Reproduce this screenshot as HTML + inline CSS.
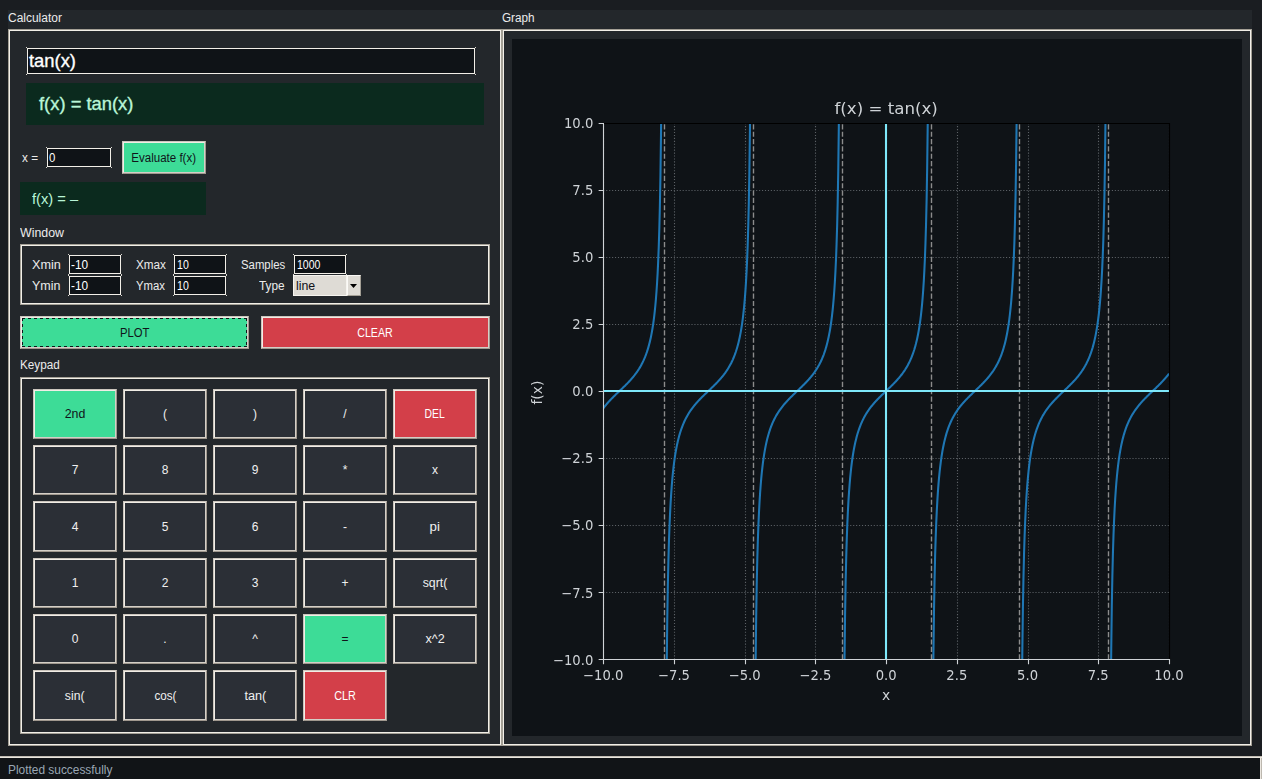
<!DOCTYPE html>
<html lang="en"><head><meta charset="utf-8"><title>Graphing Calculator</title>
<style>
html,body{margin:0;padding:0}
body{width:1262px;height:779px;background:#1a1d21;overflow:hidden;position:relative;
 font-family:"Liberation Sans",sans-serif;font-size:12px;color:#ececec}
div{position:absolute;box-sizing:border-box;white-space:nowrap}
.panel{background:#23272b}
.groove{border:1px solid #a39f95;box-shadow:inset 0 0 0 1px #f2efe8}
.t{white-space:pre;transform-origin:0 0}
.btn span{display:inline-block;transform-origin:50% 50%}
.entry{background:#0f1317;border:1px solid #f2efe8}
.entry:before,.entry:after{content:"";position:absolute;left:-2px;right:-2px;height:1px;
 background:linear-gradient(90deg,#d8d5ce 1px,transparent 1px,transparent calc(100% - 1px),#d8d5ce calc(100% - 1px))}
.entry:before{top:-2px}.entry:after{bottom:-2px}
.dispbg{background:#0b2a1e}
.btn{border:2px solid;border-color:#cbc5bd #a0988e #a0988e #cbc5bd;text-align:center;line-height:14px;font-size:12px}
.btn:after{content:"";position:absolute;left:-1px;top:-1px;right:-1px;bottom:-1px;border:1px solid;border-color:#f1ede6 #d4cfc7 #d4cfc7 #f1ede6}
.g{background:#3ddc97;color:#10141a}
.r{background:#d33f49;color:#fff}
.key{width:84px;background:#2b2f36;color:#f0f0f0}
.key.g{background:#3ddc97;color:#10141a}
.key.r{background:#d33f49;color:#fff}
svg.plot{position:absolute;left:512px;top:39px;display:block;will-change:transform}
</style></head><body>
<div class="panel" style="left:8px;top:10px;width:1244px;height:736px"></div>
<div class="groove" style="left:8px;top:29px;width:494px;height:717px"></div>
<div class="groove" style="left:502px;top:29px;width:750px;height:717px"></div>

<div class="entry" style="left:27px;top:48px;width:448px;height:26px"></div>
<div class="dispbg" style="left:26px;top:83px;width:458px;height:42px"></div>

<div class="entry" style="left:47px;top:148px;width:64px;height:19px"></div>
<div class="btn g" style="left:122px;top:141px;width:84px;height:33px;padding-top:8px"><span id="beval" style="transform:scaleX(0.9601)">Evaluate f(x)</span></div>
<div class="dispbg" style="left:20px;top:182px;width:186px;height:33px"></div>

<div class="groove" style="left:20px;top:244px;width:470px;height:61px"></div>
<div class="entry" style="left:69px;top:255px;width:52px;height:19px"></div>
<div class="entry" style="left:174px;top:255px;width:52px;height:19px"></div>
<div class="entry" style="left:294px;top:255px;width:52px;height:19px"></div>
<div class="entry" style="left:69px;top:276px;width:52px;height:19px"></div>
<div class="entry" style="left:174px;top:276px;width:52px;height:19px"></div>
<div class="combo" style="left:293px;top:275px;width:68px;height:21px;background:#dedbd5">
 <div style="left:0;top:0;width:54px;height:21px;border:1px solid #f6f4ef"></div>
 <div style="left:54px;top:0;width:14px;height:21px;border:1px solid;border-color:#fbfaf7 #a39f95 #a39f95 #fbfaf7"></div>
 <svg style="position:absolute;left:57px;top:9px" width="7" height="4" viewBox="0 0 7 4"><path d="M0 0h7L3.5 4z" fill="#000"/></svg>
</div>

<div class="btn g" style="left:20px;top:316px;width:229px;height:33px;padding-top:8px"><span id="bplot" style="transform:scaleX(0.9408)">PLOT</span><div style="left:0;top:0;right:0;bottom:0;background:repeating-linear-gradient(90deg,#10141a 0 3px,transparent 3px 6px) 0 0/100% 1px no-repeat,repeating-linear-gradient(90deg,#10141a 0 3px,transparent 3px 6px) 0 100%/100% 1px no-repeat,repeating-linear-gradient(180deg,#10141a 0 3px,transparent 3px 6px) 0 0/1px 100% no-repeat,repeating-linear-gradient(180deg,#10141a 0 3px,transparent 3px 6px) 100% 0/1px 100% no-repeat"></div></div>
<div class="btn r" style="left:261px;top:316px;width:229px;height:33px;padding-top:8px"><span id="bclear" style="transform:scaleX(0.8880)">CLEAR</span></div>

<div class="groove" style="left:20px;top:377px;width:470px;height:357px"></div>
<div class="key btn g" style="left:33px;top:389px;height:50px;padding-top:16px"><span id="k0" style="transform:scaleX(1.0317)">2nd</span></div>
<div class="key btn" style="left:123px;top:389px;height:50px;padding-top:16px"><span id="k1" style="transform:scaleX(1.0000)">(</span></div>
<div class="key btn" style="left:213px;top:389px;height:50px;padding-top:16px"><span id="k2" style="transform:scaleX(1.0000)">)</span></div>
<div class="key btn" style="left:303px;top:389px;height:50px;padding-top:16px"><span id="k3" style="transform:scaleX(1.0000)">/</span></div>
<div class="key btn r" style="left:393px;top:389px;height:50px;padding-top:16px"><span id="k4" style="transform:scaleX(0.8623)">DEL</span></div>
<div class="key btn" style="left:33px;top:445px;height:50px;padding-top:16px"><span id="k5" style="transform:scaleX(1.0000)">7</span></div>
<div class="key btn" style="left:123px;top:445px;height:50px;padding-top:16px"><span id="k6" style="transform:scaleX(1.0000)">8</span></div>
<div class="key btn" style="left:213px;top:445px;height:50px;padding-top:16px"><span id="k7" style="transform:scaleX(1.0000)">9</span></div>
<div class="key btn" style="left:303px;top:445px;height:50px;padding-top:16px"><span id="k8" style="transform:scaleX(1.0000)">*</span></div>
<div class="key btn" style="left:393px;top:445px;height:50px;padding-top:16px"><span id="k9" style="transform:scaleX(1.0000)">x</span></div>
<div class="key btn" style="left:33px;top:501px;height:51px;padding-top:17px"><span id="k10" style="transform:scaleX(1.0000)">4</span></div>
<div class="key btn" style="left:123px;top:501px;height:51px;padding-top:17px"><span id="k11" style="transform:scaleX(1.0000)">5</span></div>
<div class="key btn" style="left:213px;top:501px;height:51px;padding-top:17px"><span id="k12" style="transform:scaleX(1.0000)">6</span></div>
<div class="key btn" style="left:303px;top:501px;height:51px;padding-top:17px"><span id="k13" style="transform:scaleX(1.0000)">-</span></div>
<div class="key btn" style="left:393px;top:501px;height:51px;padding-top:17px"><span id="k14" style="transform:scaleX(1.1090)">pi</span></div>
<div class="key btn" style="left:33px;top:558px;height:50px;padding-top:16px"><span id="k15" style="transform:scaleX(1.0000)">1</span></div>
<div class="key btn" style="left:123px;top:558px;height:50px;padding-top:16px"><span id="k16" style="transform:scaleX(1.0000)">2</span></div>
<div class="key btn" style="left:213px;top:558px;height:50px;padding-top:16px"><span id="k17" style="transform:scaleX(1.0000)">3</span></div>
<div class="key btn" style="left:303px;top:558px;height:50px;padding-top:16px"><span id="k18" style="transform:scaleX(1.0000)">+</span></div>
<div class="key btn" style="left:393px;top:558px;height:50px;padding-top:16px"><span id="k19" style="transform:scaleX(1.0256)">sqrt(</span></div>
<div class="key btn" style="left:33px;top:614px;height:50px;padding-top:16px"><span id="k20" style="transform:scaleX(1.0000)">0</span></div>
<div class="key btn" style="left:123px;top:614px;height:50px;padding-top:16px"><span id="k21" style="transform:scaleX(1.0000)">.</span></div>
<div class="key btn" style="left:213px;top:614px;height:50px;padding-top:16px"><span id="k22" style="transform:scaleX(1.0000)">^</span></div>
<div class="key btn g" style="left:303px;top:614px;height:50px;padding-top:16px"><span id="k23" style="transform:scaleX(1.0000)">=</span></div>
<div class="key btn" style="left:393px;top:614px;height:50px;padding-top:16px"><span id="k24" style="transform:scaleX(1.0514)">x^2</span></div>
<div class="key btn" style="left:33px;top:670px;height:51px;padding-top:17px"><span id="k25" style="transform:scaleX(1.0157)">sin(</span></div>
<div class="key btn" style="left:123px;top:670px;height:51px;padding-top:17px"><span id="k26" style="transform:scaleX(0.9659)">cos(</span></div>
<div class="key btn" style="left:213px;top:670px;height:51px;padding-top:17px"><span id="k27" style="transform:scaleX(1.0589)">tan(</span></div>
<div class="key btn r" style="left:303px;top:670px;height:51px;padding-top:17px"><span id="k28" style="transform:scaleX(0.9042)">CLR</span></div>

<svg class="plot" width="730" height="697" viewBox="0 0 730 697">
<defs><clipPath id="axclip"><rect x="91.5" y="84.5" width="566" height="536"/></clipPath></defs>
<rect width="730" height="697" fill="#0f1317"/>
<path clip-path="url(#axclip)" d="M91.5 620.33V83.64M162.5 620.33V83.64M233.5 620.33V83.64M303.5 620.33V83.64M374.5 620.33V83.64M445.5 620.33V83.64M516.5 620.33V83.64M586.5 620.33V83.64M657.5 620.33V83.64M91.25 620.5H657M91.25 553.5H657M91.25 486.5H657M91.25 419.5H657M91.25 352.5H657M91.25 285.5H657M91.25 218.5H657M91.25 151.5H657M91.25 84.5H657" fill="none" stroke="#5c6166" stroke-width="1.11" stroke-dasharray="1.11 1.83"/>
<path clip-path="url(#axclip)" d="M91.25 369.38L91.82 368.63L92.38 367.90L92.95 367.18L93.52 366.48L94.08 365.79L94.65 365.12L95.21 364.46L95.78 363.81L96.35 363.17L96.91 362.55L97.48 361.93L98.05 361.33L98.61 360.73L99.18 360.14L99.74 359.55L100.31 358.98L100.88 358.41L101.44 357.84L102.01 357.28L102.58 356.72L103.14 356.17L103.71 355.62L104.28 355.08L104.84 354.53L105.41 353.99L105.97 353.45L106.54 352.92L107.11 352.38L107.67 351.84L108.24 351.30L108.81 350.77L109.37 350.23L109.94 349.69L110.50 349.14L111.07 348.60L111.64 348.05L112.20 347.50L112.77 346.95L113.34 346.39L113.90 345.83L114.47 345.26L115.04 344.68L115.60 344.10L116.17 343.52L116.73 342.92L117.30 342.32L117.87 341.71L118.43 341.09L119.00 340.46L119.57 339.81L120.13 339.16L120.70 338.49L121.26 337.81L121.83 337.12L122.40 336.41L122.96 335.68L123.53 334.94L124.10 334.18L124.66 333.39L125.23 332.58L125.80 331.75L126.36 330.90L126.93 330.02L127.49 329.10L128.06 328.16L128.63 327.18L129.19 326.17L129.76 325.11L130.33 324.01L130.89 322.87L131.46 321.67L132.02 320.42L132.59 319.11L133.16 317.73L133.72 316.28L134.29 314.75L134.86 313.14L135.42 311.42L135.99 309.60L136.56 307.66L137.12 305.59L137.69 303.37L138.25 300.98L138.82 298.41L139.39 295.62L139.95 292.58L140.52 289.26L141.09 285.62L141.65 281.60L142.22 277.13L142.78 272.13L143.35 266.50L143.92 260.10L144.48 252.77L145.05 244.25L145.62 234.25L146.18 222.32L146.75 207.84L147.32 189.87L147.88 166.95L148.45 136.68L149.01 94.83L149.58 33.11L150.15 -67.15L150.71 -258.66L151.28 -770.76M152.41 1962.06L152.98 1093.69L153.54 829.10L154.11 703.44L154.68 630.00L155.24 581.79L155.81 547.69L156.38 522.29L156.94 502.61L157.51 486.91L158.08 474.08L158.64 463.39L159.21 454.35L159.77 446.58L160.34 439.85L160.91 433.94L161.47 428.71L162.04 424.04L162.61 419.86L163.17 416.07L163.74 412.64L164.30 409.50L164.87 406.62L165.44 403.96L166.00 401.50L166.57 399.22L167.14 397.09L167.70 395.10L168.27 393.24L168.84 391.49L169.40 389.83L169.97 388.27L170.53 386.79L171.10 385.39L171.67 384.05L172.23 382.78L172.80 381.56L173.37 380.40L173.93 379.28L174.50 378.21L175.06 377.18L175.63 376.19L176.20 375.23L176.76 374.30L177.33 373.41L177.90 372.54L178.46 371.70L179.03 370.89L179.60 370.10L180.16 369.32L180.73 368.57L181.29 367.84L181.86 367.12L182.43 366.42L182.99 365.74L183.56 365.07L184.13 364.41L184.69 363.76L185.26 363.13L185.82 362.50L186.39 361.89L186.96 361.28L187.52 360.68L188.09 360.09L188.66 359.51L189.22 358.93L189.79 358.36L190.36 357.80L190.92 357.24L191.49 356.68L192.05 356.13L192.62 355.58L193.19 355.04L193.75 354.49L194.32 353.95L194.89 353.41L195.45 352.87L196.02 352.34L196.58 351.80L197.15 351.26L197.72 350.72L198.28 350.19L198.85 349.64L199.42 349.10L199.98 348.56L200.55 348.01L201.12 347.46L201.68 346.91L202.25 346.35L202.81 345.78L203.38 345.21L203.95 344.64L204.51 344.06L205.08 343.47L205.65 342.88L206.21 342.27L206.78 341.66L207.34 341.04L207.91 340.41L208.48 339.76L209.04 339.11L209.61 338.44L210.18 337.76L210.74 337.07L211.31 336.35L211.88 335.63L212.44 334.88L213.01 334.12L213.57 333.33L214.14 332.52L214.71 331.69L215.27 330.83L215.84 329.95L216.41 329.03L216.97 328.08L217.54 327.10L218.10 326.09L218.67 325.03L219.24 323.93L219.80 322.78L220.37 321.58L220.94 320.32L221.50 319.00L222.07 317.62L222.64 316.17L223.20 314.63L223.77 313.01L224.33 311.29L224.90 309.46L225.47 307.51L226.03 305.43L226.60 303.19L227.17 300.79L227.73 298.20L228.30 295.39L228.86 292.34L229.43 288.99L230.00 285.32L230.56 281.27L231.13 276.76L231.70 271.72L232.26 266.04L232.83 259.57L233.40 252.15L233.96 243.54L234.53 233.40L235.09 221.30L235.66 206.59L236.23 188.29L236.79 164.90L237.36 133.93L237.93 90.91L238.49 27.08L239.06 -77.59L239.62 -281.04L240.19 -848.69M241.32 1868.39L241.89 1063.17L242.46 816.26L243.02 696.41L243.59 625.56L244.16 578.74L244.72 545.47L245.29 520.59L245.85 501.27L246.42 485.82L246.99 473.18L247.55 462.64L248.12 453.70L248.69 446.03L249.25 439.36L249.82 433.51L250.38 428.33L250.95 423.70L251.52 419.55L252.08 415.80L252.65 412.38L253.22 409.26L253.78 406.40L254.35 403.76L254.92 401.32L255.48 399.05L256.05 396.93L256.61 394.96L257.18 393.10L257.75 391.35L258.31 389.71L258.88 388.15L259.45 386.68L260.01 385.28L260.58 383.95L261.14 382.68L261.71 381.47L262.28 380.31L262.84 379.19L263.41 378.13L263.98 377.10L264.54 376.11L265.11 375.16L265.68 374.23L266.24 373.34L266.81 372.48L267.37 371.64L267.94 370.83L268.51 370.04L269.07 369.27L269.64 368.52L270.21 367.78L270.77 367.07L271.34 366.37L271.90 365.68L272.47 365.01L273.04 364.36L273.60 363.71L274.17 363.08L274.74 362.45L275.30 361.84L275.87 361.23L276.44 360.64L277.00 360.05L277.57 359.46L278.13 358.89L278.70 358.32L279.27 357.75L279.83 357.19L280.40 356.64L280.97 356.09L281.53 355.54L282.10 354.99L282.66 354.45L283.23 353.91L283.80 353.37L284.36 352.83L284.93 352.30L285.50 351.76L286.06 351.22L286.63 350.68L287.20 350.14L287.76 349.60L288.33 349.06L288.89 348.52L289.46 347.97L290.03 347.42L290.59 346.86L291.16 346.30L291.73 345.74L292.29 345.17L292.86 344.60L293.42 344.01L293.99 343.43L294.56 342.83L295.12 342.23L295.69 341.61L296.26 340.99L296.82 340.36L297.39 339.71L297.96 339.06L298.52 338.39L299.09 337.71L299.65 337.01L300.22 336.30L300.79 335.57L301.35 334.82L301.92 334.06L302.49 333.27L303.05 332.46L303.62 331.62L304.18 330.76L304.75 329.88L305.32 328.96L305.88 328.01L306.45 327.03L307.02 326.01L307.58 324.94L308.15 323.84L308.72 322.69L309.28 321.48L309.85 320.22L310.41 318.90L310.98 317.51L311.55 316.05L312.11 314.51L312.68 312.88L313.25 311.15L313.81 309.31L314.38 307.35L314.94 305.26L315.51 303.01L316.08 300.60L316.64 297.99L317.21 295.16L317.78 292.09L318.34 288.72L318.91 285.02L319.48 280.94L320.04 276.39L320.61 271.31L321.17 265.57L321.74 259.03L322.31 251.53L322.87 242.81L323.44 232.54L324.01 220.27L324.57 205.31L325.14 186.69L325.70 162.82L326.27 131.10L326.84 86.87L327.40 20.83L327.97 -88.57L328.54 -305.11L329.10 -938.24M330.24 1746.19L330.80 1035.06L331.37 804.09L331.93 689.65L332.50 621.27L333.07 575.76L333.63 543.29L334.20 518.92L334.77 499.95L335.33 484.76L335.90 472.30L336.46 461.90L337.03 453.07L337.60 445.48L338.16 438.88L338.73 433.08L339.30 427.95L339.86 423.37L340.43 419.25L341.00 415.52L341.56 412.13L342.13 409.03L342.69 406.19L343.26 403.57L343.83 401.14L344.39 398.88L344.96 396.78L345.53 394.81L346.09 392.96L346.66 391.22L347.22 389.59L347.79 388.04L348.36 386.57L348.92 385.18L349.49 383.85L350.06 382.58L350.62 381.38L351.19 380.22L351.76 379.11L352.32 378.05L352.89 377.02L353.45 376.04L354.02 375.08L354.59 374.16L355.15 373.27L355.72 372.41L356.29 371.58L356.85 370.76L357.42 369.98L357.98 369.21L358.55 368.46L359.12 367.73L359.68 367.01L360.25 366.32L360.82 365.63L361.38 364.96L361.95 364.31L362.52 363.66L363.08 363.03L363.65 362.40L364.21 361.79L364.78 361.19L365.35 360.59L365.91 360.00L366.48 359.42L367.05 358.84L367.61 358.27L368.18 357.71L368.74 357.15L369.31 356.60L369.88 356.04L370.44 355.50L371.01 354.95L371.58 354.41L372.14 353.87L372.71 353.33L373.28 352.79L373.84 352.25L374.41 351.72L374.97 351.18L375.54 350.64L376.11 350.10L376.67 349.56L377.24 349.02L377.81 348.47L378.37 347.93L378.94 347.37L379.51 346.82L380.07 346.26L380.64 345.70L381.20 345.13L381.77 344.55L382.34 343.97L382.90 343.38L383.47 342.78L384.04 342.18L384.60 341.57L385.17 340.94L385.73 340.31L386.30 339.66L386.87 339.01L387.43 338.34L388.00 337.65L388.57 336.96L389.13 336.24L389.70 335.51L390.27 334.76L390.83 333.99L391.40 333.21L391.96 332.39L392.53 331.56L393.10 330.70L393.66 329.81L394.23 328.89L394.80 327.93L395.36 326.95L395.93 325.92L396.49 324.86L397.06 323.75L397.63 322.59L398.19 321.39L398.76 320.12L399.33 318.79L399.89 317.40L400.46 315.93L401.03 314.38L401.59 312.75L402.16 311.01L402.72 309.16L403.29 307.19L403.86 305.09L404.42 302.83L404.99 300.40L405.56 297.78L406.12 294.94L406.69 291.84L407.25 288.45L407.82 284.72L408.39 280.60L408.95 276.02L409.52 270.89L410.09 265.09L410.65 258.49L411.22 250.90L411.79 242.07L412.35 231.67L412.92 219.21L413.48 204.02L414.05 185.05L414.62 160.68L415.18 128.21L415.75 82.70L416.32 14.32L416.88 -100.12L417.45 -331.09L418.01 -1042.22M419.15 1642.21L419.71 1009.08L420.28 792.54L420.85 683.14L421.41 617.10L421.98 572.87L422.55 541.15L423.11 517.28L423.68 498.66L424.24 483.70L424.81 471.43L425.38 461.16L425.94 452.44L426.51 444.94L427.08 438.40L427.64 432.66L428.21 427.58L428.77 423.03L429.34 418.95L429.91 415.25L430.47 411.88L431.04 408.81L431.61 405.98L432.17 403.37L432.74 400.96L433.31 398.71L433.87 396.62L434.44 394.66L435.00 392.82L435.57 391.09L436.14 389.46L436.70 387.92L437.27 386.46L437.84 385.07L438.40 383.75L438.97 382.49L439.53 381.28L440.10 380.13L440.67 379.03L441.23 377.96L441.80 376.94L442.37 375.96L442.93 375.01L443.50 374.09L444.07 373.21L444.63 372.35L445.20 371.51L445.76 370.70L446.33 369.91L446.90 369.15L447.46 368.40L448.03 367.67L448.60 366.96L449.16 366.26L449.73 365.58L450.29 364.91L450.86 364.26L451.43 363.61L451.99 362.98L452.56 362.36L453.13 361.74L453.69 361.14L454.26 360.54L454.83 359.96L455.39 359.37L455.96 358.80L456.52 358.23L457.09 357.67L457.66 357.11L458.22 356.55L458.79 356.00L459.36 355.45L459.92 354.91L460.49 354.37L461.05 353.83L461.62 353.29L462.19 352.75L462.75 352.21L463.32 351.67L463.89 351.14L464.45 350.60L465.02 350.06L465.59 349.52L466.15 348.98L466.72 348.43L467.28 347.88L467.85 347.33L468.42 346.78L468.98 346.22L469.55 345.65L470.12 345.08L470.68 344.51L471.25 343.92L471.81 343.33L472.38 342.74L472.95 342.13L473.51 341.52L474.08 340.89L474.65 340.26L475.21 339.61L475.78 338.96L476.35 338.29L476.91 337.60L477.48 336.90L478.04 336.19L478.61 335.45L479.18 334.70L479.74 333.93L480.31 333.14L480.88 332.33L481.44 331.49L482.01 330.63L482.57 329.74L483.14 328.81L483.71 327.86L484.27 326.87L484.84 325.84L485.41 324.78L485.97 323.66L486.54 322.50L487.11 321.29L487.67 320.02L488.24 318.69L488.80 317.29L489.37 315.82L489.94 314.26L490.50 312.62L491.07 310.87L491.64 309.01L492.20 307.04L492.77 304.92L493.33 302.65L493.90 300.21L494.47 297.57L495.03 294.71L495.60 291.59L496.17 288.17L496.73 284.42L497.30 280.27L497.87 275.64L498.43 270.46L499.00 264.61L499.56 257.94L500.13 250.27L500.70 241.33L501.26 230.79L501.83 218.15L502.40 202.70L502.96 183.38L503.53 158.50L504.09 125.23L504.66 78.41L505.23 7.56L505.79 -112.29L506.36 -359.20L506.93 -1164.42M508.06 1552.66L508.63 985.01L509.19 781.56L509.76 676.89L510.32 613.06L510.89 570.04L511.46 539.07L512.02 515.68L512.59 497.38L513.16 482.67L513.72 470.57L514.29 460.43L514.85 451.82L515.42 444.40L515.99 437.93L516.55 432.25L517.12 427.21L517.69 422.70L518.25 418.65L518.82 414.98L519.39 411.63L519.95 408.58L520.52 405.77L521.08 403.18L521.65 400.78L522.22 398.54L522.78 396.46L523.35 394.51L523.92 392.68L524.48 390.96L525.05 389.34L525.61 387.80L526.18 386.35L526.75 384.97L527.31 383.65L527.88 382.39L528.45 381.19L529.01 380.04L529.58 378.94L530.15 377.88L530.71 376.87L531.28 375.89L531.84 374.94L532.41 374.02L532.98 373.14L533.54 372.28L534.11 371.45L534.68 370.64L535.24 369.85L535.81 369.09L536.37 368.34L536.94 367.62L537.51 366.90L538.07 366.21L538.64 365.53L539.21 364.86L539.77 364.21L540.34 363.56L540.91 362.93L541.47 362.31L542.04 361.70L542.60 361.09L543.17 360.50L543.74 359.91L544.30 359.33L544.87 358.76L545.44 358.19L546.00 357.62L546.57 357.06L547.13 356.51L547.70 355.96L548.27 355.41L548.83 354.87L549.40 354.33L549.97 353.78L550.53 353.25L551.10 352.71L551.67 352.17L552.23 351.63L552.80 351.10L553.36 350.56L553.93 350.02L554.50 349.48L555.06 348.93L555.63 348.39L556.20 347.84L556.76 347.29L557.33 346.73L557.89 346.17L558.46 345.61L559.03 345.04L559.59 344.46L560.16 343.88L560.73 343.29L561.29 342.69L561.86 342.08L562.43 341.47L562.99 340.84L563.56 340.21L564.12 339.56L564.69 338.90L565.26 338.23L565.82 337.55L566.39 336.85L566.96 336.13L567.52 335.40L568.09 334.65L568.65 333.87L569.22 333.08L569.79 332.27L570.35 331.43L570.92 330.56L571.49 329.67L572.05 328.74L572.62 327.78L573.19 326.79L573.75 325.76L574.32 324.69L574.88 323.57L575.45 322.41L576.02 321.19L576.58 319.92L577.15 318.58L577.72 317.18L578.28 315.70L578.85 314.14L579.41 312.48L579.98 310.73L580.55 308.87L581.11 306.88L581.68 304.75L582.25 302.47L582.81 300.01L583.38 297.35L583.95 294.47L584.51 291.33L585.08 287.90L585.64 284.11L586.21 279.93L586.78 275.26L587.34 270.03L587.91 264.12L588.48 257.39L589.04 249.62L589.61 240.58L590.17 229.89L590.74 217.06L591.31 201.36L591.87 181.68L592.44 156.28L593.01 122.18L593.57 73.97L594.14 0.53L594.71 -125.13L595.27 -389.72L595.84 -1258.09M596.97 1474.73L597.54 962.63L598.10 771.12L598.67 670.86L599.24 609.14L599.80 567.29L600.37 537.02L600.93 514.10L601.50 496.13L602.07 481.65L602.63 469.72L603.20 459.72L603.77 451.20L604.33 443.87L604.90 437.47L605.47 431.84L606.03 426.84L606.60 422.37L607.16 418.35L607.73 414.71L608.30 411.39L608.86 408.35L609.43 405.56L610.00 402.99L610.56 400.60L611.13 398.38L611.69 396.31L612.26 394.37L612.83 392.55L613.39 390.83L613.96 389.22L614.53 387.69L615.09 386.24L615.66 384.86L616.23 383.55L616.79 382.30L617.36 381.10L617.92 379.96L618.49 378.86L619.06 377.80L619.62 376.79L620.19 375.81L620.76 374.87L621.32 373.95L621.89 373.07L622.45 372.22L623.02 371.39L623.59 370.58L624.15 369.79L624.72 369.03L625.29 368.29L625.85 367.56L626.42 366.85L626.99 366.16L627.55 365.48L628.12 364.81L628.68 364.16L629.25 363.51L629.82 362.88L630.38 362.26L630.95 361.65L631.52 361.05L632.08 360.45L632.65 359.87L633.21 359.29L633.78 358.71L634.35 358.14L634.91 357.58L635.48 357.02L636.05 356.47L636.61 355.92L637.18 355.37L637.75 354.83L638.31 354.28L638.88 353.74L639.44 353.20L640.01 352.67L640.58 352.13L641.14 351.59L641.71 351.05L642.28 350.52L642.84 349.98L643.41 349.44L643.97 348.89L644.54 348.35L645.11 347.80L645.67 347.25L646.24 346.69L646.81 346.13L647.37 345.56L647.94 344.99L648.51 344.42L649.07 343.83L649.64 343.24L650.20 342.64L650.77 342.04L651.34 341.42L651.90 340.80L652.47 340.16L653.04 339.51L653.60 338.85L654.17 338.18L654.73 337.49L655.30 336.79L655.87 336.07L656.43 335.34L657.00 334.59" fill="none" stroke="#1f77b4" stroke-width="2.08" stroke-linejoin="round"/>
<path clip-path="url(#axclip)" d="M152.5 620.33V83.64M241.5 620.33V83.64M330.5 620.33V83.64M419.5 620.33V83.64M507.5 620.33V83.64M596.5 620.33V83.64" fill="none" stroke="#8c8c8c" stroke-width="1.39" stroke-dasharray="5.14 2.22"/>
<path clip-path="url(#axclip)" d="M91.25 352H657M374 620.33V83.64" fill="none" stroke="#7ee8fa" stroke-width="2.08"/>
<path d="M91.5 621.05V83.95M90.95 620.5H658.05" fill="none" stroke="#cfd3d7" stroke-width="1.11"/>
<path d="M657.5 619.95V83.95M92.05 84.5H658.05" fill="none" stroke="#000" stroke-width="1.11"/>
<path d="M91.5 620.5v4.86M91.5 620.5h-4.86M162.5 620.5v4.86M91.5 553.5h-4.86M233.5 620.5v4.86M91.5 486.5h-4.86M303.5 620.5v4.86M91.5 419.5h-4.86M374.5 620.5v4.86M91.5 352.5h-4.86M445.5 620.5v4.86M91.5 285.5h-4.86M516.5 620.5v4.86M91.5 218.5h-4.86M586.5 620.5v4.86M91.5 151.5h-4.86M657.5 620.5v4.86M91.5 84.5h-4.86" fill="none" stroke="#cfd3d7" stroke-width="1.11"/>
<g fill="#cfd3d7" font-family="'DejaVu Sans', sans-serif" font-size="13.89px">
<text transform="translate(91.25 641) scale(.95 1)" text-anchor="middle">−10.0</text>
<text transform="translate(161.97 641) scale(.95 1)" text-anchor="middle">−7.5</text>
<text transform="translate(232.69 641) scale(.95 1)" text-anchor="middle">−5.0</text>
<text transform="translate(303.41 641) scale(.95 1)" text-anchor="middle">−2.5</text>
<text transform="translate(374.12 641) scale(.95 1)" text-anchor="middle">0.0</text>
<text transform="translate(444.84 641) scale(.95 1)" text-anchor="middle">2.5</text>
<text transform="translate(515.56 641) scale(.95 1)" text-anchor="middle">5.0</text>
<text transform="translate(586.28 641) scale(.95 1)" text-anchor="middle">7.5</text>
<text transform="translate(657 641) scale(.95 1)" text-anchor="middle">10.0</text>
<text transform="translate(81.33 626) scale(.95 1)" text-anchor="end">−10.0</text>
<text transform="translate(81.33 559) scale(.95 1)" text-anchor="end">−7.5</text>
<text transform="translate(81.33 491) scale(.95 1)" text-anchor="end">−5.0</text>
<text transform="translate(81.33 424) scale(.95 1)" text-anchor="end">−2.5</text>
<text transform="translate(81.33 357) scale(.95 1)" text-anchor="end">0.0</text>
<text transform="translate(81.33 290) scale(.95 1)" text-anchor="end">2.5</text>
<text transform="translate(81.33 223) scale(.95 1)" text-anchor="end">5.0</text>
<text transform="translate(81.33 156) scale(.95 1)" text-anchor="end">7.5</text>
<text transform="translate(81.33 89) scale(.95 1)" text-anchor="end">10.0</text>
<text x="374.12" y="661" text-anchor="middle">x</text>
<text transform="translate(30 353.59) rotate(-90)" text-anchor="middle">f(x)</text>
<text x="374.12" y="75" text-anchor="middle" font-size="16.67px">f(x) = tan(x)</text>
</g></svg>

<div style="left:0;top:756px;width:1262px;height:23px;background:#111417;border-top:1px solid #c2bdb4;box-shadow:inset 0 1px 0 #ebe7e0,inset -1px 0 0 #bdb8af,inset -2px 0 0 #ebe7e0"></div>
<div class="t" id="calc" style="left:8.46px;top:11.00px;font-size:12px;line-height:14px;transform:scaleX(0.9972);color:#ececec">Calculator</div>
<div class="t" id="graph" style="left:501.83px;top:11.00px;font-size:12px;line-height:14px;transform:scaleX(0.9771);color:#ececec">Graph</div>
<div class="t" id="xeq" style="left:21.64px;top:151.00px;font-size:12px;line-height:14px;transform:scaleX(0.9796);color:#ececec">x =</div>
<div class="t" id="fx" style="left:31.75px;top:190.00px;font-size:15px;line-height:17px;transform:scaleX(0.9809);color:#b9f5d8">f(x) = –</div>
<div class="t" id="win" style="left:19.77px;top:226.00px;font-size:12px;line-height:14px;transform:scaleX(1.0314);color:#ececec">Window</div>
<div class="t" id="xmin" style="left:32.18px;top:258.00px;font-size:12px;line-height:14px;transform:scaleX(1.0541);color:#ececec">Xmin</div>
<div class="t" id="ymin" style="left:31.86px;top:279.00px;font-size:12px;line-height:14px;transform:scaleX(1.0410);color:#ececec">Ymin</div>
<div class="t" id="xmax" style="left:136.24px;top:258.00px;font-size:12px;line-height:14px;transform:scaleX(0.9766);color:#ececec">Xmax</div>
<div class="t" id="ymax" style="left:136.32px;top:279.00px;font-size:12px;line-height:14px;transform:scaleX(0.9466);color:#ececec">Ymax</div>
<div class="t" id="samp" style="left:240.72px;top:258.00px;font-size:12px;line-height:14px;transform:scaleX(0.9455);color:#ececec">Samples</div>
<div class="t" id="type" style="left:258.96px;top:279.00px;font-size:12px;line-height:14px;transform:scaleX(0.9843);color:#ececec">Type</div>
<div class="t" id="line" style="left:296.34px;top:279.00px;font-size:12px;line-height:14px;transform:scaleX(1.0289);color:#101018">line</div>
<div class="t" id="e0" style="left:48.84px;top:151.00px;font-size:12px;line-height:14px;transform:scaleX(0.9499);color:#ffffff">0</div>
<div class="t" id="e1" style="left:71.30px;top:258.00px;font-size:12px;line-height:14px;transform:scaleX(0.9850);color:#ffffff">-10</div>
<div class="t" id="e2" style="left:71.30px;top:279.00px;font-size:12px;line-height:14px;transform:scaleX(0.9850);color:#ffffff">-10</div>
<div class="t" id="e3" style="left:176.72px;top:258.00px;font-size:12px;line-height:14px;transform:scaleX(0.8808);color:#ffffff">10</div>
<div class="t" id="e4" style="left:176.72px;top:279.00px;font-size:12px;line-height:14px;transform:scaleX(0.8808);color:#ffffff">10</div>
<div class="t" id="e5" style="left:296.72px;top:258.00px;font-size:12px;line-height:14px;transform:scaleX(0.8756);color:#ffffff">1000</div>
<div class="t" id="keyp" style="left:20.30px;top:358.00px;font-size:12px;line-height:14px;transform:scaleX(0.9751);color:#ececec">Keypad</div>
<div class="t" id="stat" style="left:8.08px;top:763.00px;font-size:12px;line-height:14px;transform:scaleX(0.9911);color:#9aa7b4">Plotted successfully</div>
<div class="t" id="expr" style="left:29.20px;top:50.00px;font-size:18.67px;line-height:21px;transform:scaleX(0.9841);color:#ffffff;-webkit-text-stroke:.35px">tan(x)</div>
<div class="t" id="disp" style="left:38.72px;top:93.30px;font-size:18.67px;line-height:21px;transform:scaleX(0.9848);color:#b9f5d8;-webkit-text-stroke:.35px">f(x) = tan(x)</div>
</body></html>
